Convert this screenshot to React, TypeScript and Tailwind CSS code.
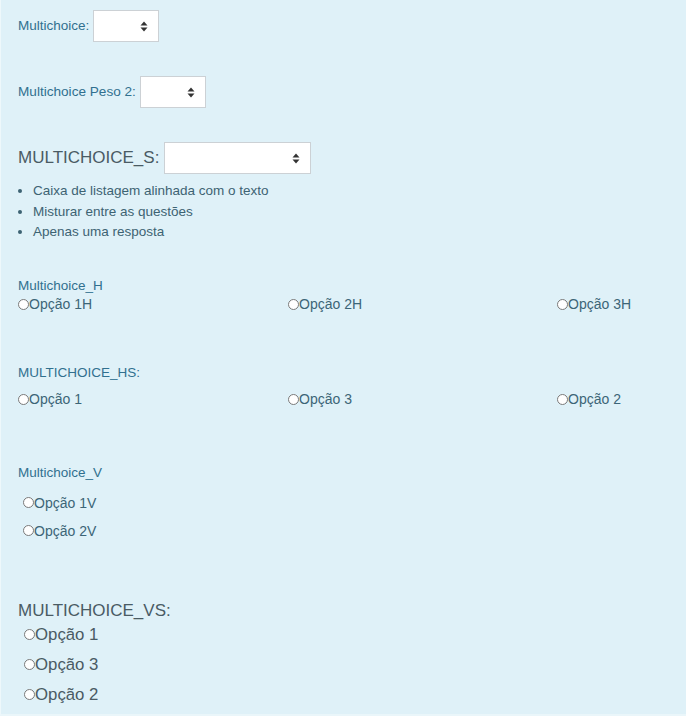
import React from "react";

function Caret() {
  return (
    <svg width="8" height="11" viewBox="0 0 8 11" className="shrink-0">
      <path d="M4 0.5 L7.5 4.5 L0.5 4.5 Z" fill="#333" />
      <path d="M4 10.5 L7.5 6.5 L0.5 6.5 Z" fill="#333" />
    </svg>
  );
}

function Select({ width }: { width: string }) {
  return (
    <div className={`${width} h-[32px] bg-white border border-[#ccd1d5] flex items-center justify-end pr-[10px] ml-[4px]`}>
      <Caret />
    </div>
  );
}

function Radio({ className = "" }: { className?: string }) {
  return <span className={`inline-block w-[11px] h-[11px] rounded-full border border-[#7a7a7a] bg-white shrink-0 ${className}`} />;
}

export default function App() {
  const font = { fontFamily: '"Liberation Sans", Arial, sans-serif' };
  return (
    <div style={font} className="h-[716px] bg-[#dff1f8] border-l border-l-[#eef8fb] border-b-2 border-b-[#eaf6fa] pl-[17px] text-[#31708f]">
      {/* Selects */}
      <div className="flex items-center pt-[10px]">
        <span className="text-[13.5px]">Multichoice:</span>
        <Select width="w-[66px]" />
      </div>
      <div className="flex items-center mt-[34px]">
        <span className="text-[13.6px]">Multichoice Peso 2:</span>
        <Select width="w-[66px]" />
      </div>
      <div className="flex items-center mt-[34px]">
        <span className="text-[17px] text-[#4a5b64] mr-[1px]">MULTICHOICE_S:</span>
        <Select width="w-[147px]" />
      </div>
      <ul className="list-disc pl-[15px] mt-[7px] text-[13.5px] leading-[20.5px] text-[#3d6373]">
        <li>Caixa de listagem alinhada com o texto</li>
        <li>Misturar entre as questões</li>
        <li>Apenas uma resposta</li>
      </ul>

      {/* Horizontal */}
      <div className="mt-[34px] text-[13.5px] leading-[18px]">Multichoice_H</div>
      <div className="grid grid-cols-[270px_269px_1fr] text-[14px] leading-[19px] text-[#3c6577]">
        <div className="flex items-center"><Radio />Opção 1H</div>
        <div className="flex items-center"><Radio />Opção 2H</div>
        <div className="flex items-center"><Radio />Opção 3H</div>
      </div>

      <div className="mt-[50px] text-[13.5px] leading-[18px]">MULTICHOICE_HS:</div>
      <div className="mt-[8px] grid grid-cols-[270px_269px_1fr] text-[14px] leading-[19px] text-[#3c6577]">
        <div className="flex items-center"><Radio />Opção 1</div>
        <div className="flex items-center"><Radio />Opção 3</div>
        <div className="flex items-center"><Radio />Opção 2</div>
      </div>

      {/* Vertical */}
      <div className="mt-[55px] text-[13.5px] leading-[18px]">Multichoice_V</div>
      <div className="mt-[7px] text-[14px] leading-[28px] text-[#3c6577]">
        <div className="flex items-center pl-[5px]"><Radio />Opção 1V</div>
        <div className="flex items-center pl-[5px]"><Radio />Opção 2V</div>
      </div>

      <div className="mt-[56px] text-[17px] leading-[19px] text-[#4a5b64]">MULTICHOICE_VS:</div>
      <div className="text-[16.8px] leading-[30px] text-[#4a5b64]">
        <div className="flex items-center pl-[6px]"><Radio />Opção 1</div>
        <div className="flex items-center pl-[6px]"><Radio />Opção 3</div>
        <div className="flex items-center pl-[6px]"><Radio />Opção 2</div>
      </div>
    </div>
  );
}
